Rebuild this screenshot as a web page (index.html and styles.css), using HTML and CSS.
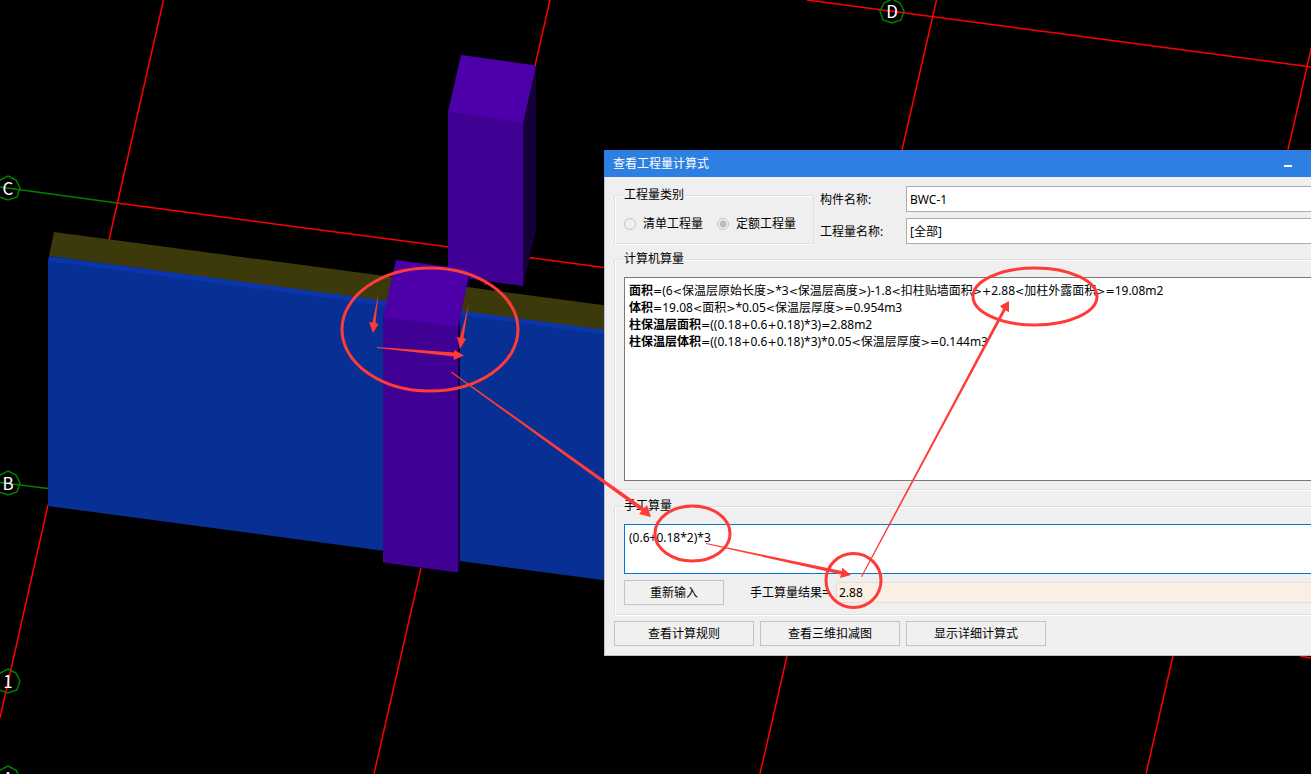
FILE: index.html
```html
<!DOCTYPE html>
<html lang="zh-CN">
<head>
<meta charset="utf-8">
<meta name="viewport" content="width=device-width, initial-scale=1">
<title>查看工程量计算式</title>
<link rel="stylesheet" href="styles.css">
</head>
<body>
<main class="workspace">
  <svg class="scene" aria-label="三维视图">
    <g class="axis">
      <path d="M163.500 0L109 240M550 0L485 285M421 568L374 774M936.500 0L902 150M787 656L760 774M1315 32L1288 150M1173 656L1146 774"/>
      <path d="M807 0L1311 67M117 203L604 267.500M48 505L0 718M1300 656L1311 658"/>
    </g>
    <g class="axis-end">
      <path d="M0 187L117 203M0 482.500L48 488.500"/>
      <path id="bubble" d="M8 176L16 180L20 188L17 197L8 200L-1 197L-4 188L0 180Z"/>
      <use href="#bubble" y="295"/>
      <use href="#bubble" y="493"/>
      <use href="#bubble" y="590"/>
      <use href="#bubble" x="884" y="-177"/>
    </g>
    <g class="axis-name">
      <text x="8" y="195">C</text>
      <text x="8" y="490">B</text>
      <text x="8" y="688">1</text>
      <text x="8" y="785">A</text>
      <text x="892" y="18">D</text>
    </g>
    <path class="slab" d="M54 232L610 306V332L49 256Z"/>
    <path class="wall-edge" d="M49 256L610 330.500V336L48 262Z"/>
    <path class="wall" d="M48 261L610 335V581L48 506Z"/>
    <path class="column-side" d="M523 122L536 65V230L523 286Z"/>
    <path class="column-front" d="M448 112L523 122V286L448 276Z"/>
    <path class="column-top" d="M461 55L536 65.500L523 122.500L448 112Z"/>
    <path class="column-side" d="M470 270V287H466L460 316V561L458 573V327Z"/>
    <path class="column-front" d="M383 316L458 326V572.500L383 562.500Z"/>
    <path class="column-top" d="M396 260L470 270L458 327L383 317Z"/>
  </svg>

  <section class="dialog" aria-labelledby="dialog-title">
    <header class="titlebar">
      <h1 class="title" id="dialog-title">查看工程量计算式</h1>
      <button class="minimize" type="button" aria-label="最小化"></button>
    </header>
    <form class="body">
      <div class="top">
        <fieldset class="group kinds">
          <legend>工程量类别</legend>
          <div class="radios">
            <label class="radio"><input type="radio" name="kind" disabled>清单工程量</label>
            <label class="radio"><input type="radio" name="kind" checked disabled>定额工程量</label>
          </div>
        </fieldset>
        <div class="fields">
          <label for="part">构件名称:</label>
          <input class="field" id="part" type="text" value="BWC-1">
          <label for="quantity">工程量名称:</label>
          <select class="field" id="quantity"><option>[全部]</option></select>
        </div>
      </div>

      <fieldset class="group computed">
        <legend>计算机算量</legend>
        <div class="output">
          <p><b>面积</b><i>=</i>(6<i>&lt;</i>保温层原始长度<i>&gt;</i>*3<i>&lt;</i>保温层高度<i>&gt;</i>)-1.8<i>&lt;</i>扣柱贴墙面积<i>&gt;+</i>2.88<i>&lt;</i>加柱外露面积<i>&gt;=</i>19.08m2</p>
          <p><b>体积</b><i>=</i>19.08<i>&lt;</i>面积<i>&gt;</i>*0.05<i>&lt;</i>保温层厚度<i>&gt;=</i>0.954m3</p>
          <p><b>柱保温层面积</b><i>=</i>((0.18<i>+</i>0.6<i>+</i>0.18)*3)<i>=</i>2.88m2</p>
          <p><b>柱保温层体积</b><i>=</i>((0.18<i>+</i>0.6<i>+</i>0.18)*3)*0.05<i>&lt;</i>保温层厚度<i>&gt;=</i>0.144m3</p>
        </div>
      </fieldset>

      <fieldset class="group manual">
        <legend>手工算量</legend>
        <textarea class="formula" aria-label="手工算量">(0.6+0.18*2)*3</textarea>
        <div class="result-row">
          <button class="button reset" type="button">重新输入</button>
          <label for="result">手工算量结果=</label>
          <input class="result" id="result" type="text" value="2.88" readonly>
        </div>
      </fieldset>

      <div class="actions">
        <button class="button" type="button">查看计算规则</button>
        <button class="button" type="button">查看三维扣减图</button>
        <button class="button" type="button">显示详细计算式</button>
      </div>
    </form>
  </section>

  <svg class="notes" aria-hidden="true">
    <g class="rings">
      <ellipse cx="430" cy="329.500" rx="88" ry="61.500"/>
      <ellipse cx="692.500" cy="533.500" rx="37.500" ry="27.500"/>
      <ellipse cx="853.500" cy="580.500" rx="27.500" ry="27"/>
      <ellipse cx="1035" cy="296.500" rx="62" ry="28.500"/>
    </g>
    <g class="arrows">
      <path d="M378.500 293L375.500 323L378.500 324L373 333L369 322L372.500 322.500Z"/>
      <path d="M468.500 305L463.500 338L466 339L460 349L457 337L460 337.500Z"/>
      <path d="M377 347L454 352.500L454.500 350L464 355.500L453.500 360L454 356.500L377 348Z"/>
      <path d="M451.500 371.500L644 508L647 505L651 517L639 514L641.500 511L451 372.500Z"/>
      <path d="M706 543L842 571L842 567.500L851 575L840 578L841 574.500L706 544Z"/>
      <path d="M861 576.500L1003 309L1000 306L1009 301L1009 312L1005.500 310.500L862 577Z"/>
    </g>
  </svg>
</main>
</body>
</html>
```
FILE: styles.css
```css
* {
  box-sizing: border-box;
}

body {
  margin: 0;
  background: #000;
  color: #000;
  font: 12px/17px "Noto Sans", "Noto Sans CJK SC", sans-serif;
}

input,
select,
textarea,
button {
  margin: 0;
  font: inherit;
  color: inherit;
  border-radius: 0;
}

.workspace {
  position: relative;
  min-height: 100vh;
  overflow: hidden;
}

.scene,
.notes {
  position: absolute;
  inset: 0;
  width: 100%;
  height: 100%;
}

.notes {
  pointer-events: none;
}

.axis,
.axis-end {
  fill: none;
  stroke: #f00;
  stroke-width: 1.5;
}

.axis-end {
  stroke: #008000;
}

.axis-name {
  fill: #fff;
  font: 17px "Noto Sans CJK SC", sans-serif;
  text-anchor: middle;
}

.slab { fill: #3c390b; }
.wall-edge { fill: #0b36ab; }
.wall { fill: #082f93; }
.column-top { fill: #4d00aa; }
.column-front { fill: #400093; }
.column-side { fill: #16003a; }

.rings {
  fill: none;
  stroke: #ff3b37;
  stroke-width: 3;
}

.arrows {
  fill: #ff3b37;
}

.dialog {
  position: absolute;
  top: 150px;
  left: 604px;
  right: 0;
  background: #efefef;
}

.titlebar {
  display: flex;
  align-items: center;
  justify-content: space-between;
  height: 27px;
  padding: 0 13px 0 9px;
  background: #2d80e2;
  color: #fff;
}

.title {
  margin: 0;
  font-size: 12px;
  font-weight: 400;
}

.minimize {
  width: 20px;
  height: 20px;
  padding: 6px;
  border: 0;
  background: none;
}

.minimize::before {
  content: "";
  display: block;
  height: 2px;
  margin-top: 4px;
  background: #fff;
}

.body {
  padding: 9px 0 9px 9px;
  border: solid #b9c0cc;
  border-width: 0 0 1px 1px;
}

.top {
  display: flex;
  align-items: flex-end;
  gap: 6px;
}

.group {
  min-width: 0;
  margin: 0;
  padding: 10px 0 8px 9px;
  border: 1px solid #dfdfdf;
  border-right: 0;
  box-shadow: inset 1px 1px #fff, 0 1px #fff;
}

.group legend {
  margin-left: -2px;
  padding: 0 2px;
  line-height: 16px;
  background: #efefef;
}

.kinds {
  flex: none;
  width: 200px;
  padding: 13px 0 11px 9px;
  border-right: 1px solid #dfdfdf;
}

.radios {
  display: flex;
  gap: 14px;
}

.radio {
  display: flex;
  align-items: center;
  gap: 7px;
  line-height: 16px;
}

.radio input {
  appearance: none;
  width: 12px;
  height: 12px;
  border: 1px solid #c3c3c3;
  border-radius: 50%;
}

.radio input:checked {
  background: radial-gradient(circle, #bdbdbd 3px, transparent 4px);
}

.fields {
  flex: 1;
  display: grid;
  grid-template-columns: 80px 1fr;
  gap: 6px;
  align-items: center;
}

.field {
  appearance: none;
  width: 100%;
  height: 26px;
  padding: 0 3px;
  border: 1px solid #adadad;
  border-right: 0;
  background: #fff;
}

.computed {
  margin-top: 7px;
}

.output {
  height: 204px;
  padding: 4px;
  border: 1px solid #7a7a7a;
  border-right: 0;
  background: #fff;
  white-space: nowrap;
}

.output p {
  margin: 0;
}

.output i {
  font: 11px/1 "DejaVu Sans", sans-serif;
}

.manual {
  margin-top: 8px;
  padding-bottom: 9px;
}

.formula {
  display: block;
  width: 100%;
  height: 50px;
  padding: 4px;
  border: 1px solid #0078d7;
  border-right: 0;
  outline: 0;
  background: #fff;
  resize: none;
}

.result-row {
  display: flex;
  align-items: center;
  margin-top: 6px;
}

.result-row label {
  width: 86px;
}

.result {
  flex: 1;
  min-width: 0;
  height: 21px;
  padding: 0 2px;
  border: 1px solid #dedede;
  border-right: 0;
  background: #fbeee3;
}

.button {
  width: 140px;
  height: 25px;
  padding: 0;
  border: 1px solid #c3c3c3;
  background: #f0f0f0;
}

.reset {
  width: 100px;
  margin-right: 26px;
}

.actions {
  display: flex;
  gap: 6px;
  margin-top: 6px;
}
```
